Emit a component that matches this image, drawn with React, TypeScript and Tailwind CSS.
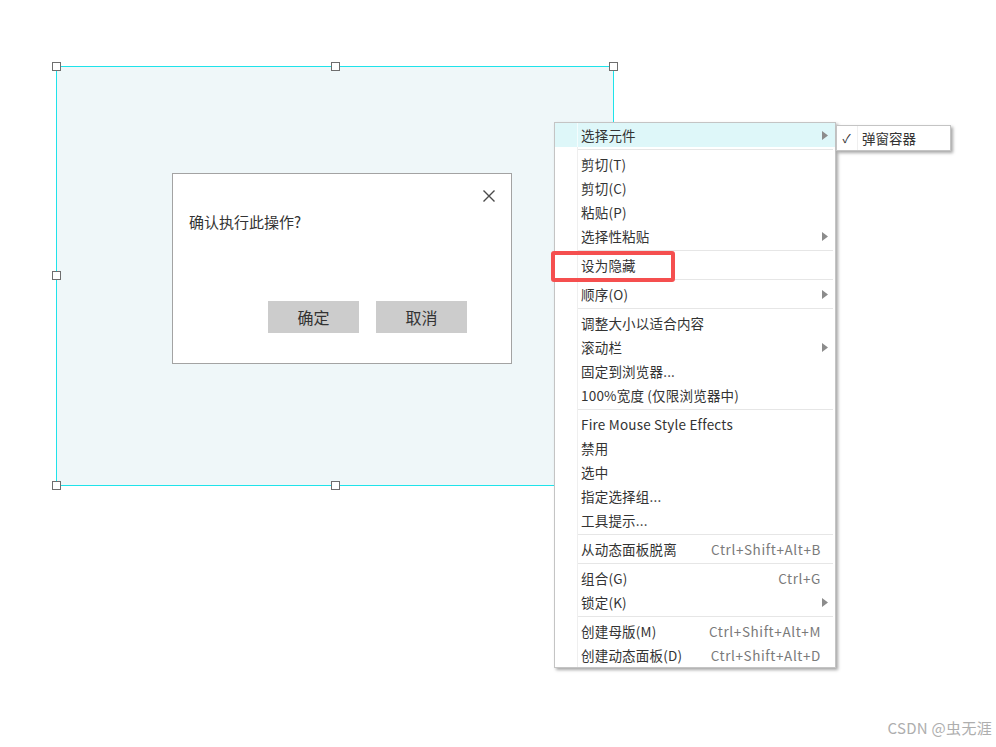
import React from 'react';

type MenuEntry =
  | { sep: true }
  | { sep?: false; label: string; arrow?: boolean; shortcut?: string; active?: boolean };

const MENU: MenuEntry[] = [
  { label: '选择元件', arrow: true, active: true },
  { sep: true },
  { label: '剪切(T)' },
  { label: '剪切(C)' },
  { label: '粘贴(P)' },
  { label: '选择性粘贴', arrow: true },
  { sep: true },
  { label: '设为隐藏' },
  { sep: true },
  { label: '顺序(O)', arrow: true },
  { sep: true },
  { label: '调整大小以适合内容' },
  { label: '滚动栏', arrow: true },
  { label: '固定到浏览器...' },
  { label: '100%宽度 (仅限浏览器中)' },
  { sep: true },
  { label: 'Fire Mouse Style Effects' },
  { label: '禁用' },
  { label: '选中' },
  { label: '指定选择组...' },
  { label: '工具提示...' },
  { sep: true },
  { label: '从动态面板脱离', shortcut: 'Ctrl+Shift+Alt+B' },
  { sep: true },
  { label: '组合(G)', shortcut: 'Ctrl+G' },
  { label: '锁定(K)', arrow: true },
  { sep: true },
  { label: '创建母版(M)', shortcut: 'Ctrl+Shift+Alt+M' },
  { label: '创建动态面板(D)', shortcut: 'Ctrl+Shift+Alt+D' },
];

const FONT = { fontFamily: '"Noto Sans CJK SC", "Noto Sans", sans-serif' };

function Arrow() {
  return (
    <svg width="6" height="9" viewBox="0 0 6 9" className="mr-[7px]">
      <path d="M0 0 L6 4.5 L0 9 Z" fill="#8c8c8c" />
    </svg>
  );
}

function Handle({ className }: { className: string }) {
  return <div className={`absolute w-[9px] h-[9px] bg-white border-[1.5px] border-[#6e6e6e] ${className}`} />;
}

function ContextMenu() {
  return (
    <div className="absolute left-[554px] top-[122px] w-[282px] bg-white border border-[#c4c4c4] shadow-[2px_2px_3px_rgba(0,0,0,0.35)] text-[13.5px] text-[#333]">
      {MENU.map((m, i) =>
        m.sep ? (
          <div key={i} className="flex h-[5px]">
            <div className="w-[22px] shrink-0" />
            <div className="flex-1 border-l border-[#efefef] flex items-center pr-[2px]">
              <div className="h-px w-full bg-[#e6e6e6]" />
            </div>
          </div>
        ) : (
          <div key={i} className={`flex h-[24px] ${m.active ? 'bg-[#def7f9]' : ''}`}>
            <div className="w-[22px] shrink-0" />
            <div className={`flex-1 flex items-center pl-[3px] border-l ${m.active ? 'border-[#f4fcfd]' : 'border-[#efefef]'}`}>
              <span className="whitespace-nowrap tracking-[0.2px]">{m.label}</span>
              {m.shortcut && <span className="ml-auto mr-[14px] text-[#7a7a7a] whitespace-nowrap tracking-[0.6px]">{m.shortcut}</span>}
              {m.arrow && (
                <span className="ml-auto flex items-center">
                  <Arrow />
                </span>
              )}
            </div>
          </div>
        )
      )}
    </div>
  );
}

export default function App() {
  return (
    <div className="relative w-[996px] h-[747px] bg-white overflow-hidden" style={FONT}>
      {/* selected dynamic panel on canvas */}
      <div className="absolute left-[56px] top-[66px] w-[558px] h-[420px] border border-[#1ee3ea] bg-[#eff7f9]">
        <Handle className="left-[-5px] top-[-5px]" />
        <Handle className="left-[274px] top-[-5px]" />
        <Handle className="right-[-5px] top-[-5px]" />
        <Handle className="left-[-5px] top-[204px]" />
        <Handle className="left-[-5px] bottom-[-5px]" />
        <Handle className="left-[274px] bottom-[-5px]" />

        {/* dialog widget */}
        <div className="absolute left-[115px] top-[106px] w-[340px] h-[191px] bg-white border border-[#a3a3a3] flex flex-col">
          <div className="flex justify-end pt-[16px] pr-[16px]">
            <svg width="12" height="12" viewBox="0 0 12 12">
              <path d="M0.5 0.5 L11.5 11.5 M11.5 0.5 L0.5 11.5" stroke="#4a4a4a" strokeWidth="1.4" />
            </svg>
          </div>
          <div className="mt-[10px] pl-[16px] text-[15px] leading-[20px] text-[#333]">确认执行此操作?</div>
          <div className="mt-[69px] flex justify-end gap-[17px] pr-[44px]">
            <div className="w-[91px] h-[32px] bg-[#cccccc] flex items-center justify-center text-[16px] text-[#333]">确定</div>
            <div className="w-[91px] h-[32px] bg-[#cccccc] flex items-center justify-center text-[16px] text-[#333]">取消</div>
          </div>
        </div>
      </div>

      <ContextMenu />

      {/* submenu */}
      <div className="absolute left-[836px] top-[125px] w-[115px] h-[26px] bg-white border border-[#c4c4c4] shadow-[2px_2px_3px_rgba(0,0,0,0.35)] flex text-[13.5px] text-[#333]">
        <div className="w-[20px] shrink-0 flex items-center justify-center text-[12px] text-[#333] pr-[1px]">✓</div>
        <div className="flex-1 flex items-center pl-[4px] border-l border-[#efefef]">弹窗容器</div>
      </div>

      {/* annotation */}
      <div className="absolute left-[551px] top-[251px] w-[124px] h-[31px] border-[4px] border-[#f54f4f] rounded-[3px]" />

      <div className="absolute right-[4px] top-[717px] text-[15px] text-[#aeaeae] tracking-[0.3px]">CSDN @虫无涯</div>
    </div>
  );
}
